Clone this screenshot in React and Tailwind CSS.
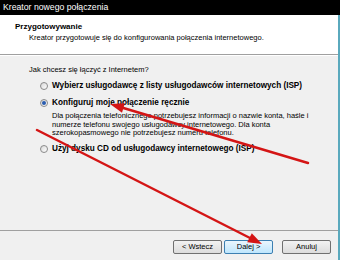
import React from 'react';

function Radio({ checked }) {
  return (
    <span className="relative flex h-[8px] w-[8px] shrink-0 items-center justify-center rounded-full border border-[#8a8a8a] bg-gradient-to-br from-[#d8d8d8] to-white">
      {checked && <span className="h-[4px] w-[4px] rounded-full bg-[#2a5db0]" />}
    </span>
  );
}

function Button({ children, active }) {
  return (
    <button
      className={
        active
          ? 'flex h-[14px] w-[49px] items-center justify-center rounded-[2px] border border-[#3c7fb1] bg-gradient-to-b from-[#eaf6fd] to-[#bee6fd] text-[7.5px] text-black'
          : 'flex h-[14px] w-[49px] items-center justify-center rounded-[2px] border border-[#707070] bg-gradient-to-b from-[#f2f2f2] to-[#dcdcdc] text-[7.5px] text-black'
      }
    >
      {children}
    </button>
  );
}

export default function App() {
  return (
    <div className="relative flex h-[260px] w-[340px] flex-col overflow-hidden bg-[#f0f0f0] font-['Liberation_Sans',sans-serif] text-[7.5px] text-black">
      {/* title bar */}
      <div className="flex h-[15px] shrink-0 items-center bg-black pl-[3px] text-[8.7px] text-white">
        Kreator nowego połączenia
      </div>

      <div className="flex flex-1 flex-col border-r-2 border-[#5aa9bd]">
        {/* header */}
        <div className="h-[40px] shrink-0 border-b border-[#a0a0a0] bg-white pl-[15px] pt-[6px]">
          <div className="text-[8px] font-bold leading-[11px]">Przygotowywanie</div>
          <div className="pl-[14px] leading-[11px]">
            Kreator przygotowuje się do konfigurowania połączenia internetowego.
          </div>
        </div>

        {/* body */}
        <div className="flex flex-1 flex-col border-t border-white">
          <div className="pl-[29px] pt-[9px] leading-[9px]">Jak chcesz się łączyć z Internetem?</div>

          <div className="mt-[7px] flex flex-col pl-[40px]">
            <label className="flex h-[10px] items-center gap-[4px] text-[8.2px] font-bold">
              <Radio />
              Wybierz usługodawcę z listy usługodawców internetowych (ISP)
            </label>
            <label className="mt-[7px] flex h-[10px] items-center gap-[4px] text-[8.2px] font-bold">
              <Radio checked />
              Konfiguruj moje połączenie ręcznie
            </label>
            <div className="mt-[4px] pl-[12px] leading-[8.7px]">
              <div>Dla połączenia telefonicznego potrzebujesz informacji o nazwie konta, haśle i</div>
              <div>numerze telefonu swojego usługodawcy internetowego. Dla konta</div>
              <div>szerokopasmowego nie potrzebujesz numeru telefonu.</div>
            </div>
            <label className="mt-[6px] flex h-[10px] items-center gap-[4px] text-[8.2px] font-bold">
              <Radio />
              Użyj dysku CD od usługodawcy internetowego (ISP)
            </label>
          </div>

          {/* footer */}
          <div className="mt-auto flex h-[30px] items-center justify-end border-t border-[#a0a0a0] pr-[7px] pt-[3px]">
            <div className="flex gap-[2px]">
              <Button>&lt; Wstecz</Button>
              <Button active>Dalej &gt;</Button>
            </div>
            <div className="ml-[9px]">
              <Button>Anuluj</Button>
            </div>
          </div>
        </div>
      </div>

      {/* red annotation arrows */}
      <svg className="pointer-events-none absolute inset-0" width="340" height="260" viewBox="0 0 340 260">
        <line x1="308" y1="163" x2="120" y2="107" stroke="#d41515" strokeWidth="2.5" strokeLinecap="round" />
        <polygon points="110,104 124.8,103.2 122,112.8" fill="#d41515" />
        <line x1="37" y1="130" x2="252" y2="239" stroke="#d41515" strokeWidth="2.5" strokeLinecap="round" />
        <polygon points="262,244 247.2,242.2 251.8,233.2" fill="#d41515" />
      </svg>
    </div>
  );
}
